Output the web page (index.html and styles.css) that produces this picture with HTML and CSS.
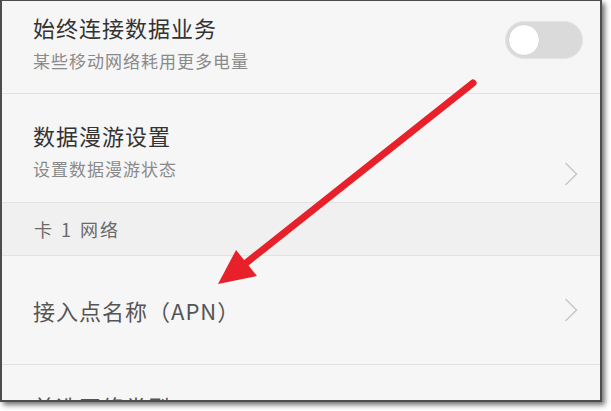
FILE: index.html
```html
<!DOCTYPE html>
<html lang="zh-CN">
<head>
<meta charset="utf-8">
<link rel="stylesheet" href="styles.css">
</head>
<body>
<div class="frame">
  <div class="panel">
    <div class="row row-first">
      <div class="text">
        <div class="title">始终连接数据业务</div>
        <div class="sub">某些移动网络耗用更多电量</div>
      </div>
      <div class="toggle"><div class="knob"></div></div>
    </div>
    <div class="row row-std">
      <div class="text">
        <div class="title">数据漫游设置</div>
        <div class="sub">设置数据漫游状态</div>
      </div>
      <svg class="chev" width="14" height="24" viewBox="0 0 14 24"><polyline points="1.5,1 12.5,12 1.5,23" fill="none" stroke="#c9c9c9" stroke-width="1.6"/></svg>
    </div>
    <div class="section">卡 1 网络</div>
    <div class="row row-single">
      <div class="title light">接入点名称（APN）</div>
      <svg class="chev" width="14" height="24" viewBox="0 0 14 24"><polyline points="1.5,1 12.5,12 1.5,23" fill="none" stroke="#c9c9c9" stroke-width="1.6"/></svg>
    </div>
    <div class="row row-std last">
      <div class="text">
        <div class="title light">首选网络类型</div>
      </div>
    </div>
    <svg class="arrow" width="598" height="400" viewBox="0 0 598 400">
      <line x1="471" y1="82" x2="244" y2="262" stroke="#e8202a" stroke-width="7" stroke-linecap="round"/>
      <polygon points="216,283 234,249 255,275" fill="#e8202a"/>
    </svg>
  </div>
</div>
</body>
</html>
```

FILE: styles.css
```css
html, body {
  margin: 0;
  padding: 0;
  background: #ffffff;
}
body {
  font-family: "Noto Sans CJK SC", "Noto Sans", sans-serif;
  width: 611px;
  height: 411px;
  overflow: hidden;
}
.frame {
  width: 602px;
  height: 402px;
  box-sizing: border-box;
  border-style: solid;
  border-color: #4d4d4d;
  border-width: 1px 2px 2px 2px;
  box-shadow: 3px 3px 5px rgba(0, 0, 0, 0.55);
  background: #f6f6f6;
  overflow: hidden;
}
.panel {
  position: relative;
  height: 100%;
  overflow: hidden;
}
.row {
  display: flex;
  align-items: center;
  justify-content: space-between;
  padding: 0 22px 0 31px;
  border-bottom: 1px solid #e2e2e2;
  box-sizing: border-box;
}
.row-first {
  height: 93px;
  align-items: flex-start;
  padding-top: 11px;
  padding-right: 17px;
}
.row-std {
  height: 109px;
  align-items: flex-start;
  padding-top: 26px;
}
.row-std .chev {
  margin-top: 42px;
}
.row-single {
  height: 109px;
}
.section {
  height: 53px;
  box-sizing: border-box;
  background: #f0f0f0;
  border-bottom: 1px solid #e2e2e2;
  display: flex;
  align-items: center;
  padding-left: 32px;
  font-size: 18px;
  color: #6a6a6a;
  letter-spacing: 2px;
  word-spacing: 1px;
}
.text {
  display: flex;
  flex-direction: column;
  gap: 8px;
}
.title {
  font-size: 22px;
  line-height: 30px;
  color: #333333;
  letter-spacing: 1px;
}
.title.light {
  color: #555555;
}
.sub {
  font-size: 17px;
  line-height: 22px;
  color: #8a8a8a;
  letter-spacing: 1px;
}
.toggle {
  margin-top: 9px;
  width: 78px;
  height: 38px;
  box-sizing: border-box;
  border-radius: 19px;
  background: #dadada;
  border: 1px solid #e3e3e3;
  display: flex;
  align-items: center;
  padding-left: 2px;
}
.knob {
  width: 32px;
  height: 32px;
  border-radius: 50%;
  background: #ffffff;
  border: 1px solid #d4d4d4;
  box-sizing: border-box;
}
.chev {
  display: block;
}
.arrow {
  position: absolute;
  left: 0;
  top: 0;
  pointer-events: none;
}
```
